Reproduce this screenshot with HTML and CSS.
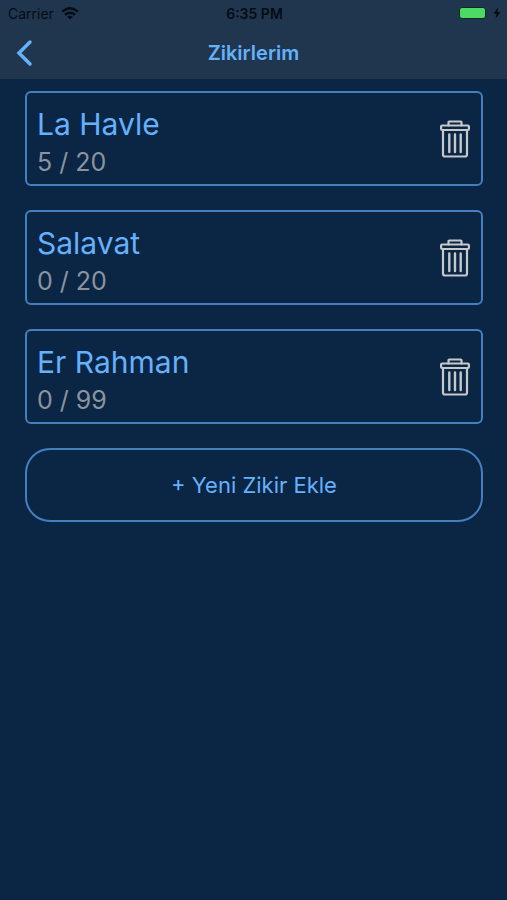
FILE: index.html
```html
<!DOCTYPE html>
<html lang="tr">
<head>
    <meta charset="UTF-8">
    <meta name="viewport" content="width=device-width, initial-scale=1.0">
    <title>Zikirlerim</title>
    <link rel="stylesheet" href="styles.css">
</head>
<body>
    <svg class="icon-defs" width="0" height="0" aria-hidden="true">
        <symbol id="trash" viewBox="0 0 30 38">
            <g fill="none" stroke="#c6c8ca" stroke-width="2.200" stroke-linejoin="round" stroke-linecap="round">
                <path d="M8.500 5.500V2.200Q8.500 1.500 9.200 1.500H20.800Q21.500 1.500 21.500 2.200V5.500"/>
                <rect x="1.100" y="5.500" width="27.800" height="4.500" rx="1"/>
                <path d="M3 10V34.500Q3 36.500 5 36.500H25Q27 36.500 27 34.500V10"/>
                <path stroke-width="2.400" d="M9.300 14.500V32M15 14.500V32M20.700 14.500V32"/>
            </g>
        </symbol>
    </svg>

    <header class="header">
        <div class="status-bar">
            <div class="status-left">
                <span>Carrier</span>
                <svg width="18" height="13" viewBox="0 0 18 13" aria-hidden="true">
                    <g fill="none" stroke="#050b12" stroke-width="2.500">
                        <path d="M1.200 4.600Q9-2 16.800 4.600"/>
                        <path d="M4 7.800Q9 3.700 14 7.800"/>
                    </g>
                    <path fill="#050b12" d="M6.200 9.800Q9 7.600 11.800 9.800L9 12.600Z"/>
                </svg>
            </div>
            <span class="status-time">6:35 PM</span>
            <div class="status-right">
                <span class="battery"></span>
                <svg width="8" height="12" viewBox="0 0 8 12" aria-hidden="true">
                    <path fill="#050b12" d="M5 0.500L0.500 6.800H3.500L2.600 11.500L7.500 5H4.500Z"/>
                </svg>
            </div>
        </div>
        <nav class="nav-bar">
            <a href="#" class="back-link" aria-label="Geri">
                <svg width="18" height="28" viewBox="0 0 18 28" aria-hidden="true">
                    <path fill="none" stroke="#66b1fb" stroke-width="3.500" stroke-linecap="round" stroke-linejoin="miter" d="M15 3L4 14L15 25"/>
                </svg>
            </a>
            <h1 class="nav-title">Zikirlerim</h1>
        </nav>
    </header>

    <main class="main">
        <div class="card">
            <div class="card-text">
                <h2 class="card-title">La Havle</h2>
                <p class="card-count">5 / 20</p>
            </div>
            <button class="delete-button" aria-label="Sil"><svg width="30" height="38" aria-hidden="true"><use href="#trash"/></svg></button>
        </div>
        <div class="card">
            <div class="card-text">
                <h2 class="card-title">Salavat</h2>
                <p class="card-count">0 / 20</p>
            </div>
            <button class="delete-button" aria-label="Sil"><svg width="30" height="38" aria-hidden="true"><use href="#trash"/></svg></button>
        </div>
        <div class="card">
            <div class="card-text">
                <h2 class="card-title">Er Rahman</h2>
                <p class="card-count">0 / 99</p>
            </div>
            <button class="delete-button" aria-label="Sil"><svg width="30" height="38" aria-hidden="true"><use href="#trash"/></svg></button>
        </div>
        <button class="add-button">+ Yeni Zikir Ekle</button>
    </main>
</body>
</html>
```

FILE: styles.css
```css
/* General Styles */
* {
    box-sizing: border-box;
}

body {
    margin: 0;
    min-height: 100vh;
    font-family: Inter, 'Liberation Sans', sans-serif;
    background-color: #0b2545;
    color: #66b1fb;
}

h1, h2, p {
    margin: 0;
    font-weight: 400;
}

button {
    font-family: inherit;
    color: inherit;
    background: none;
    cursor: pointer;
}

.icon-defs {
    position: absolute;
}

/* Header Styles */
.header {
    background-color: #20364f;
}

.status-bar {
    display: grid;
    grid-template-columns: 1fr auto 1fr;
    align-items: center;
    height: 26px;
    padding: 0 6px 0 8px;
    font-size: 14px;
    color: #050b12;
}

.status-left,
.status-right {
    display: flex;
    align-items: center;
    gap: 7px;
}

.status-right {
    justify-content: flex-end;
}

.status-time {
    font-weight: 600;
}

.battery {
    width: 27px;
    height: 12px;
    border: 1px solid #10281f;
    border-radius: 3px;
    background-color: #4cd964;
}

.nav-bar {
    display: grid;
    grid-template-columns: 1fr auto 1fr;
    align-items: center;
    height: 53px;
    padding: 0 15px;
}

.back-link {
    display: flex;
}

.nav-title {
    font-size: 20px;
    font-weight: 600;
}

/* Main Content Styles */
.main {
    display: flex;
    flex-direction: column;
    gap: 24px;
    padding: 12px 24px 24px 25px;
}

.card {
    display: flex;
    justify-content: space-between;
    align-items: center;
    padding: 0 11px 0 10px;
    border: 2px solid #4480c0;
    border-radius: 6px;
}

.card-text {
    padding: 12px 0 5px;
}

.card-title {
    font-size: 30px;
    line-height: 38px;
}

.card-count {
    font-size: 25px;
    line-height: 38px;
    margin-bottom: -2px;
    color: #8a949e;
}

.delete-button {
    display: flex;
    padding: 0;
    border: none;
}

.add-button {
    height: 74px;
    border: 2px solid #4480c0;
    border-radius: 25px;
    font-size: 22px;
}
```
